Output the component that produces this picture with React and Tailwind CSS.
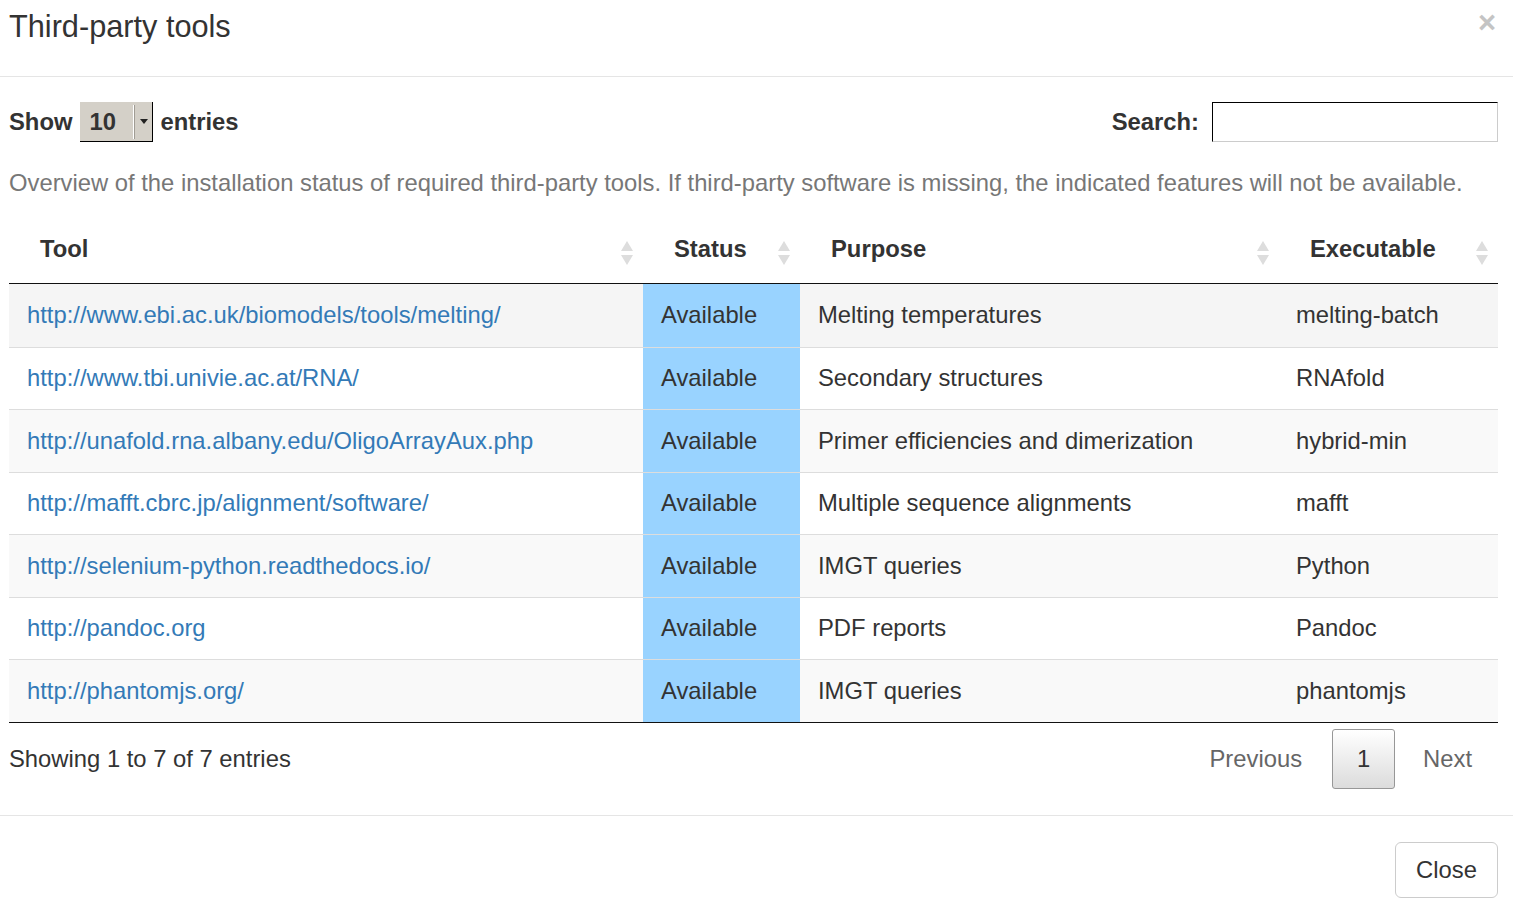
import React from "react";

const rows = [
  ["http://www.ebi.ac.uk/biomodels/tools/melting/", "Melting temperatures", "melting-batch"],
  ["http://www.tbi.univie.ac.at/RNA/", "Secondary structures", "RNAfold"],
  ["http://unafold.rna.albany.edu/OligoArrayAux.php", "Primer efficiencies and dimerization", "hybrid-min"],
  ["http://mafft.cbrc.jp/alignment/software/", "Multiple sequence alignments", "mafft"],
  ["http://selenium-python.readthedocs.io/", "IMGT queries", "Python"],
  ["http://pandoc.org", "PDF reports", "Pandoc"],
  ["http://phantomjs.org/", "IMGT queries", "phantomjs"],
];

const SortIcon = () => (
  <svg width="14" height="26" viewBox="0 0 14 26" className="shrink-0">
    <path d="M7 1 L13 11 L1 11 Z" fill="#dddddd" />
    <path d="M7 25 L13 15 L1 15 Z" fill="#dddddd" />
  </svg>
);

const Th = ({ children }) => (
  <div className="flex items-start justify-between pl-[31px] pr-[9px] pt-[4px]">
    <span className="font-bold leading-[30px]">{children}</span>
    <div className="pt-[6px]">
      <SortIcon />
    </div>
  </div>
);

const cols = "grid grid-cols-[634px_157px_479px_219px]";

const App = () => {
  return (
    <div className="w-[1513px] h-[910px] bg-white text-[#333] text-[23.8px] overflow-hidden" style={{ fontFamily: '"Liberation Sans", Arial, sans-serif' }}>
      {/* header */}
      <div className="h-[77px] border-b border-[#e5e5e5] flex items-start justify-between pl-[9px] pr-[17px]">
        <h4 className="text-[30.7px] leading-[30px] pt-[12px]">Third-party tools</h4>
        <button className="text-[31px] font-bold leading-[30px] pt-[8px] text-[#c4c4c4]">×</button>
      </div>

      {/* body */}
      <div className="pl-[9px] pr-[15px]">
        <div className="mt-[25px] h-[40px] flex items-center justify-between">
          <div className="flex items-center font-bold">
            <span>Show</span>
            <div className="ml-[8px] mr-[7px] w-[73px] h-[40px] bg-[#d4d0c8] border-r border-b border-black flex items-center">
              <span className="pl-[9px] w-[53px]">10</span>
              <div className="h-[34px] w-[2px] border-l border-white border-r border-r-[#a09c94]"></div>
              <div className="flex-1 flex justify-center">
                <svg width="8" height="5" viewBox="0 0 8 5"><path d="M0 0 L8 0 L4 5 Z" fill="#222" /></svg>
              </div>
            </div>
            <span>entries</span>
          </div>
          <div className="flex items-center">
            <span className="font-bold mr-[13px]">Search:</span>
            <input className="w-[286px] h-[40px] border border-t-black border-l-black border-r-[#ccc] border-b-[#ccc] outline-none" />
          </div>
        </div>

        <p className="mt-[26px] leading-[30px] text-[#777]">
          Overview of the installation status of required third-party tools. If third-party software is missing, the indicated features will not be available.
        </p>

        {/* table */}
        <div className="mt-[32px]">
          <div className={`${cols} h-[54px] border-b border-[#111]`}>
            <Th>Tool</Th>
            <Th>Status</Th>
            <Th>Purpose</Th>
            <Th>Executable</Th>
          </div>
          {rows.map((r, i) => (
            <div
              key={i}
              className={`${cols} h-[62.5px] ${i > 0 ? "border-t border-[#ddd]" : ""} ${
                i === 0 ? "bg-[#f5f5f5]" : i % 2 === 0 ? "bg-[#f9f9f9]" : "bg-white"
              }`}
            >
              <div className="flex items-center pl-[18px]">
                <a href="#" className="text-[#337ab7]">{r[0]}</a>
              </div>
              <div className="flex items-center pl-[18px] bg-[#99d3ff]">Available</div>
              <div className="flex items-center pl-[18px]">{r[1]}</div>
              <div className="flex items-center pl-[17px]">{r[2]}</div>
            </div>
          ))}
          <div className="border-t border-[#111]"></div>
        </div>

        <div className="mt-[6px] h-[60px] flex items-center justify-between">
          <span>Showing 1 to 7 of 7 entries</span>
          <div className="flex items-center pr-[26px]">
            <span className="text-[#666]">Previous</span>
            <button className="ml-[30px] w-[63px] h-[60px] rounded-[3px] border border-[#979797] bg-gradient-to-b from-white to-[#dcdcdc]">1</button>
            <span className="ml-[28px] text-[#666]">Next</span>
          </div>
        </div>
      </div>

      {/* footer */}
      <div className="mt-[26px] border-t border-[#e5e5e5] pt-[26px] pr-[15px] flex justify-end">
        <button className="w-[103px] h-[56px] border border-[#ccc] rounded-[6px] bg-white">Close</button>
      </div>
    </div>
  );
};

export default App;
